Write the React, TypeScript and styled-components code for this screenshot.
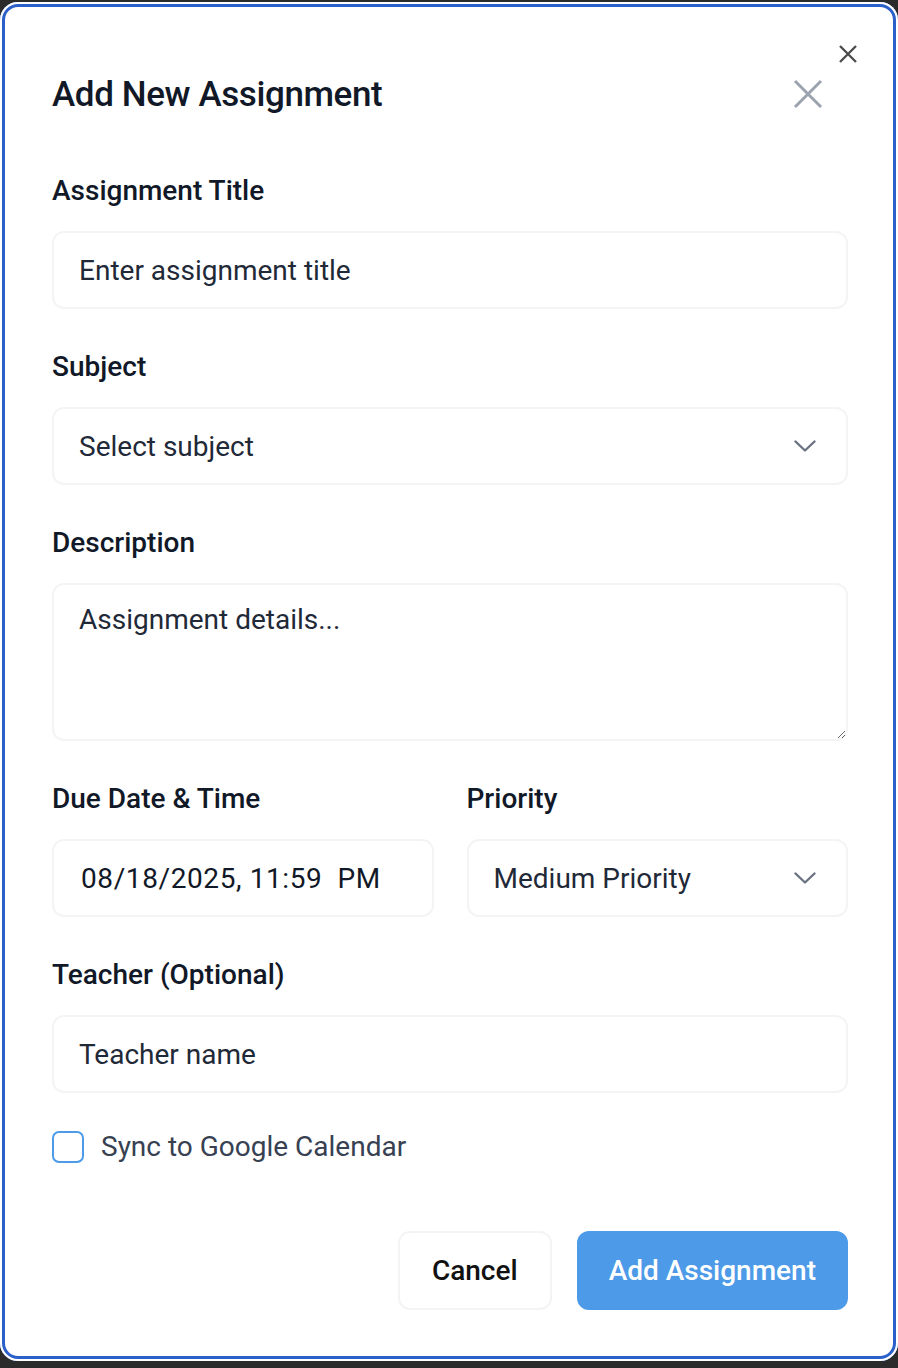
import React from "react";
import styled, { createGlobalStyle } from "styled-components";

const Global = createGlobalStyle`
  html, body { margin: 0; padding: 0; background: #2b2b2b; }
  body { font-family: Roboto, "Noto Sans", Arial, sans-serif; }
  * { box-sizing: border-box; }
`;

const Dialog = styled.div`
  position: relative;
  margin-top: 2px;
  width: 898px;
  height: 1359px;
  background: #fff;
  border-radius: 18px;
  box-shadow: inset 0 0 0 2px #fff, inset 0 0 0 5px #2c60c9;
  padding: 64px 50px 0 52px;
  display: flex;
  flex-direction: column;
`;

const NativeClose = styled.button`
  position: absolute;
  top: 42px;
  right: 40px;
  width: 20px;
  height: 20px;
  padding: 0;
  border: 0;
  background: transparent;
  display: flex;
  align-items: center;
  justify-content: center;
`;

const Header = styled.div`
  height: 56px;
  display: flex;
  align-items: center;
  justify-content: space-between;
  margin-bottom: 53px;
`;

const Title = styled.h2`
  margin: 0;
  font-size: 35px;
  font-weight: 500;
  color: #111827;
  letter-spacing: -0.4px;
`;

const CloseButton = styled.button`
  width: 40px;
  height: 40px;
  margin-right: 20px;
  padding: 0;
  border: 0;
  background: transparent;
  display: flex;
  align-items: center;
  justify-content: center;
`;

const Fields = styled.div`
  display: flex;
  flex-direction: column;
  gap: 42px;
`;

const Field = styled.div`
  display: flex;
  flex-direction: column;
  gap: 24px;
  min-width: 0;
`;

const Row = styled.div`
  display: grid;
  grid-template-columns: 1fr 1fr;
  gap: 33px;
`;

const Label = styled.label`
  font-size: 28px;
  line-height: 32px;
  font-weight: 500;
  color: #111827;
`;

const boxCss = `
  width: 100%;
  height: 78px;
  border: 2px solid #f3f4f6;
  border-radius: 12px;
  background: #fff;
  font-family: Roboto, "Noto Sans", Arial, sans-serif;
  font-size: 28px;
  color: #111827;
  outline: none;
`;

const TextInput = styled.input<{ $pl?: number; $ls?: number }>`
  ${boxCss}
  padding: 0 0 0 ${(p) => p.$pl ?? 25}px;
  letter-spacing: ${(p) => p.$ls ?? 0}px;
  &::placeholder { color: #1f2937; opacity: 1; }
`;

const TextArea = styled.textarea`
  ${boxCss}
  height: 158px;
  padding: 19px 25px;
  line-height: 32px;
  resize: vertical;
  &::placeholder { color: #1f2937; opacity: 1; }
`;

const SelectBox = styled.div`
  ${boxCss}
  display: flex;
  align-items: center;
  justify-content: space-between;
  padding: 0 30px 0 25px;
  color: #1f2937;
`;

const CheckRow = styled.label`
  margin-top: 37px;
  display: flex;
  align-items: center;
  gap: 17px;
  font-size: 28px;
  color: #374151;
`;

const CheckBox = styled.span`
  width: 32px;
  height: 32px;
  border: 2px solid #4d9ae8;
  border-radius: 7px;
  background: #fff;
`;

const Actions = styled.div`
  margin-top: 68px;
  display: flex;
  justify-content: flex-end;
  gap: 25px;
`;

const Button = styled.button<{ $primary?: boolean }>`
  height: 79px;
  padding: 0 ${(p) => (p.$primary ? 30 : 32)}px;
  border-radius: 12px;
  border: 2px solid ${(p) => (p.$primary ? "#4d9ae8" : "#f3f4f6")};
  background: ${(p) => (p.$primary ? "#4d9ae8" : "#fff")};
  color: ${(p) => (p.$primary ? "#fff" : "#111")};
  font-family: Roboto, "Noto Sans", Arial, sans-serif;
  font-size: 28px;
  font-weight: 500;
`;

const Chevron = () => (
  <svg width="22" height="12" viewBox="0 0 22 12" fill="none">
    <path d="M1.5 1.5 L11 10.5 L20.5 1.5" stroke="#6b7280" strokeWidth="2.4" strokeLinecap="round" strokeLinejoin="round" />
  </svg>
);

export default function App() {
  return (
    <>
      <Global />
      <Dialog>
        <NativeClose aria-label="Close dialog">
          <svg width="20" height="20" viewBox="0 0 20 20">
            <path d="M2 2 L18 18 M18 2 L2 18" stroke="#4b4b4b" strokeWidth="2.3" />
          </svg>
        </NativeClose>
        <Header>
          <Title>Add New Assignment</Title>
          <CloseButton aria-label="Close">
            <svg width="30" height="30" viewBox="0 0 30 30">
              <path d="M2 2 L28 28 M28 2 L2 28" stroke="#9ca3af" strokeWidth="3" />
            </svg>
          </CloseButton>
        </Header>
        <Fields>
          <Field>
            <Label>Assignment Title</Label>
            <TextInput placeholder="Enter assignment title" />
          </Field>
          <Field>
            <Label>Subject</Label>
            <SelectBox>
              <span>Select subject</span>
              <Chevron />
            </SelectBox>
          </Field>
          <Field>
            <Label>Description</Label>
            <TextArea placeholder="Assignment details..." />
          </Field>
          <Row>
            <Field>
              <Label>Due Date &amp; Time</Label>
              <TextInput $pl={27} $ls={0.6} defaultValue="08/18/2025, 11:59  PM" />
            </Field>
            <Field>
              <Label>Priority</Label>
              <SelectBox>
                <span>Medium Priority</span>
                <Chevron />
              </SelectBox>
            </Field>
          </Row>
          <Field>
            <Label>Teacher (Optional)</Label>
            <TextInput placeholder="Teacher name" />
          </Field>
        </Fields>
        <CheckRow>
          <CheckBox />
          Sync to Google Calendar
        </CheckRow>
        <Actions>
          <Button>Cancel</Button>
          <Button $primary>Add Assignment</Button>
        </Actions>
      </Dialog>
    </>
  );
}
